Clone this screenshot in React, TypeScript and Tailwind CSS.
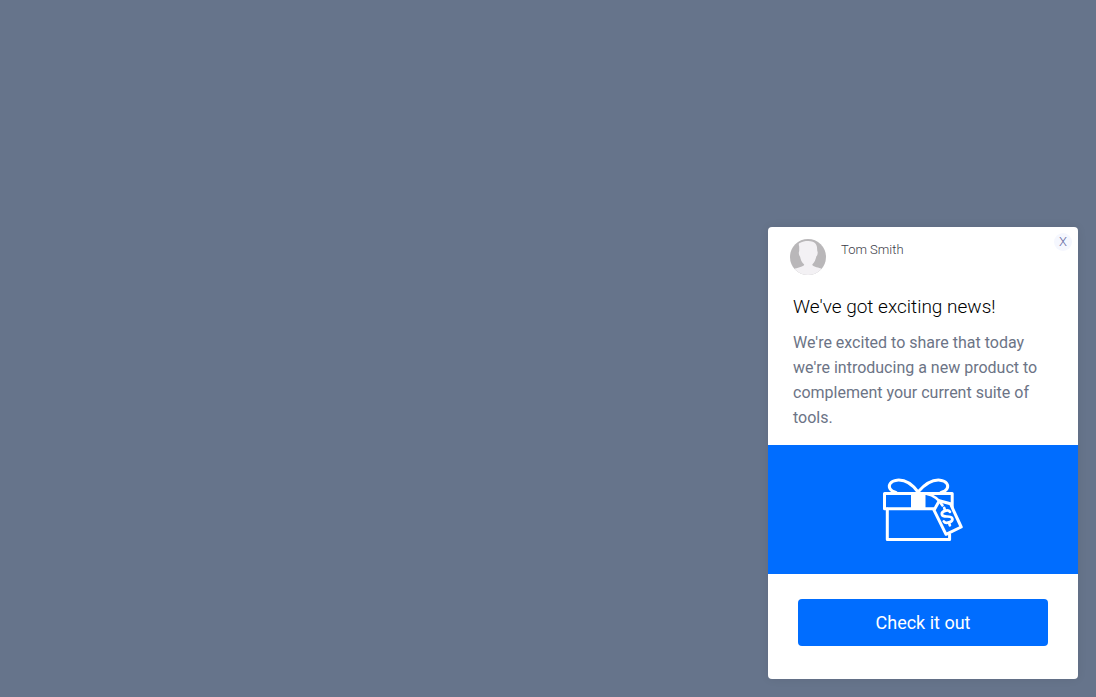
import React from "react";

function Avatar() {
  return (
    <svg viewBox="0 0 36 36" className="size-9 shrink-0" role="img" aria-label="Tom Smith">
      <defs>
        <clipPath id="avatar-circle">
          <circle cx="18" cy="18" r="18" />
        </clipPath>
      </defs>
      <g clipPath="url(#avatar-circle)">
        <rect width="36" height="36" fill="#b9b7b9" />
        <path
          d="M9.2 4.2 C12 2.6 15 2 18.5 2 C23.5 2 27 4.8 27 8.6 L27.3 12 C28.2 13.4 27.6 16 26.3 17.6 C25.6 21 24.5 23.4 22.3 25.4 C22.2 27.6 27 28 31 29.6 L36 36 H0 L5 29.6 C9 28 14.2 27.6 14.2 25.4 C11.6 23.6 10.6 20.6 10.1 17.8 C8.8 16 8.4 13.6 9.2 12 V7.6 C9.2 6.6 8.2 5.4 9.2 4.2 Z"
          fill="#f3f1f4"
        />
      </g>
    </svg>
  );
}

function GiftIcon() {
  return (
    <svg
      viewBox="12 11.5 82 66"
      className="h-[66px] w-[82px]"
      fill="none"
      stroke="#ffffff"
      strokeWidth="3"
      strokeLinejoin="round"
      strokeLinecap="round"
      aria-hidden="true"
    >
      <path d="M48 26.5 C42 18.5 34 14 27 14.7 C20.5 15.4 18 19.5 20 23.2 C21 25.2 23.5 26.3 26 27" />
      <path d="M48 26.5 C55 18.5 63 14 70 14.7 C76.5 15.4 79 19.5 77 23.2 C76 25.2 73.5 26.3 71 27" />
      <path d="M14.5 27.9 H82.2 V43.3 H14.5 Z" />
      <path d="M17.3 43.5 V74 H79.6 V69" />
      <rect x="41" y="27" width="14.5" height="17.5" fill="#ffffff" stroke="none" />
      <path d="M69.3 35.2 L80.4 38.2 L91.2 61.5 L76 68.8 L64 44.7 Z" fill="#006dff" />
      <path d="M57 28.5 C62 29.5 68 32.5 72.5 40" strokeWidth="2.6" />
      <g transform="translate(77 51) rotate(-18)" strokeWidth="2.7">
        <path d="M4.2 -3.6 C3.4 -6.8 -4.2 -7 -4.2 -3.2 C-4.2 0.6 4.4 -0.6 4.4 3.4 C4.4 7.2 -3.8 7 -4.5 3.6" />
        <path d="M0 -9 V-6 M0 6.4 V9.2" />
      </g>
    </svg>
  );
}

export default function App() {
  return (
    <main className="flex min-h-screen items-end justify-end bg-[#66748b] p-[18px] font-['Roboto',sans-serif]">
      <section
        role="dialog"
        aria-labelledby="news-title"
        className="w-full max-w-[310px] overflow-hidden rounded-[4px] bg-white shadow-[0_0_10px_rgba(0,0,0,0.08)]"
      >
        <header className="flex items-start pt-3 pr-1.5 pl-[22px]">
          <Avatar />
          <span className="ml-[15px] grow pt-0.5 text-[13px] leading-[18px] font-[350] text-[#3c3c48]">Tom Smith</span>
          <button
            type="button"
            aria-label="Close"
            className="-mt-1.5 flex size-[18px] items-center justify-center rounded-full bg-[#f5f7fe] text-[13px] leading-[18px] font-[350] text-[#6468a0]"
          >
            X
          </button>
        </header>

        <div className="px-[25px] pt-5 pb-[15px]">
          <h1 id="news-title" className="text-[19px] leading-6 font-[350] text-black">
            We've got exciting news!
          </h1>
          <p className="mt-[11px] text-[16px] leading-[25px] text-[#6c7486]">
            We're excited to share that today we're introducing a new product to complement your current suite of
            tools.
          </p>
        </div>

        <div className="flex h-[129px] items-center justify-center bg-[#006dff]">
          <GiftIcon />
        </div>

        <footer className="px-[30px] pt-[25px] pb-[33px]">
          <button
            type="button"
            className="h-[47px] w-full rounded-[4px] bg-[#006dff] text-[18px] leading-6 text-white"
          >
            Check it out
          </button>
        </footer>
      </section>
    </main>
  );
}
